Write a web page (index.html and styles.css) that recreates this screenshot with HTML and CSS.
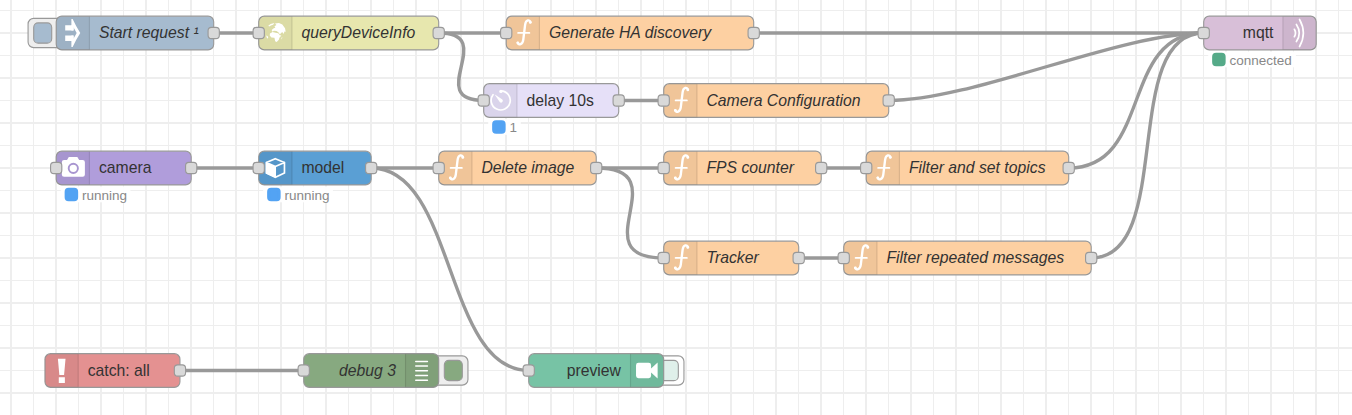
FILE: index.html
```html
<!DOCTYPE html>
<html lang="en">
<head>
<meta charset="utf-8">
<title>Flow editor</title>
<link rel="stylesheet" href="styles.css">
</head>
<body>
<svg class="flow" width="1352" height="415" viewBox="0 0 1352 415">
  <defs>
    <pattern id="grid" x="10" y="10" width="45" height="45" patternUnits="userSpaceOnUse">
      <path class="grid-line" d="M0 0h2v45h-2zM23 0h1v45h-1zM0 0h45v1h-45zM0 22h45v2h-45z"/>
    </pattern>
    <rect id="port" class="port" x="-5" y="-5" width="10" height="10" rx="3"/>
    <g id="shade-left">
      <path class="shade" d="M5 -15H30V15H5A5 5 0 0 1 0 10V-10A5 5 0 0 1 5 -15Z"/>
      <path class="divider" d="M29.5 -14.5V14.5"/>
    </g>
    <g id="shade-right">
      <path class="shade" d="M0 -15H25A5 5 0 0 1 30 -10V10A5 5 0 0 1 25 15H0Z"/>
      <path class="divider" d="M.5 -14.5V14.5"/>
    </g>
    <g id="fn">
      <use href="#shade-left"/>
      <path class="ink" stroke-width="2.1" d="M21.6 -9.6C21 -12.1 17.4 -12 16.8 -7.2L15.2 5.8C14.6 10.5 11 11 10.2 8.8"/>
      <circle class="white" cx="21.4" cy="-9.4" r="1.2"/><circle class="white" cx="10.4" cy="8.7" r="1.2"/>
      <path class="ink" stroke-width="1.6" d="M10.6 -.1H20.6"/>
    </g>
    <g id="status-dot"><rect x="9" y="19" width="9" height="9" rx="2"/></g>
  </defs>
  <rect width="1352" height="415" fill="url(#grid)"/>
  <g transform="translate(56.2 33) scale(1.125)">
    <g class="wires">
      <path d="M140 0H180"/><path d="M340 0H400"/><path d="M620 0H1020"/>
      <path d="M340 0C394 0 326 60 380 60"/>
      <path d="M500 60H540"/><path d="M740 60C815 60 945 0 1020 0"/>
      <path d="M120 120H180"/><path d="M280 120H340"/><path d="M480 120H540"/><path d="M680 120H720"/>
      <path d="M900 120C975 120 945 0 1020 0"/>
      <path d="M480 120C555 120 465 200 540 200"/>
      <path d="M660 200H700"/><path d="M920 200C995 200 945 0 1020 0"/>
      <path d="M280 120C355 120 345 300 420 300"/><path d="M110 300H220"/>
    </g>

    <g>
      <rect class="button" x="-25" y="-13" width="32" height="26" rx="5"/>
      <rect class="box inject" x="-20" y="-9" width="16" height="18" rx="4"/>
      <rect class="box inject" y="-15" width="140" height="30" rx="5"/>
      <use href="#shade-left"/>
      <path class="white" d="M8 -7H13.5V-12.4H14.6Q17.3 -6.5 21.4 0Q17.3 6.5 14.6 12.4H13.5V7H8V2.2H15.2V5.4L18.2 0L15.2 -5.4V-2.2H8Z"/>
      <path class="white" d="M13.5 -7H15.6V-2.2H13.5ZM13.5 2.2H15.6V7H13.5Z"/>
      <text class="label em" x="38" y="4.8">Start request ¹</text>
      <use href="#port" x="140"/>
    </g>

    <g transform="translate(180 0)">
      <rect class="box http" y="-15" width="160" height="30" rx="5"/>
      <use href="#shade-left"/>
      <path class="white" d="M8.5 -6.4L10.6 -8.1L14 -9L12.8 -7.4L10.8 -6.7L9.3 -5.8ZM14.5 -8.4L18 -9L21 -7.5L23.4 -4.3L24 -1.2L22.9 -1.4L22.2 .9L21.2 -.6L20 -.2L18.9 1.4L17.5 -.6L15.8 -1.7L13.5 -2L12.2 -1.2L11.5 -2.6L13.4 -4.2L14.8 -4.6L14 -6.1L15.8 -7.2ZM10 .4L12.3 -1L15 -.2L17.4 .2L18.7 2.1L20.2 2.2L18.4 4.2L17.9 6L16 7.9L14.6 7.4L14 4.3L11.3 3.9L9.8 2.2ZM7 2L8.5 3.5L8 5.2L6.8 3.5ZM20.2 4.2L21.1 3.7L20.4 5.8Z"/>
      <text class="label em" x="38" y="4.8">queryDeviceInfo</text>
      <use href="#port"/><use href="#port" x="160"/>
    </g>

    <g transform="translate(400 0)">
      <rect class="box function" y="-15" width="220" height="30" rx="5"/>
      <use href="#fn"/>
      <text class="label em" x="38" y="4.8">Generate HA discovery</text>
      <use href="#port"/><use href="#port" x="220"/>
    </g>

    <g transform="translate(1020 0)">
      <rect class="box mqtt" y="-15" width="100" height="30" rx="5"/>
      <use href="#shade-right" x="70"/>
      <path class="ink" stroke-width="1.5" stroke-linecap="butt" d="M80.6 -3.3Q82.6 0 80.6 3.3M82.4 -7.6Q87.5 0 82.4 7.6M85.2 -12Q92 0 85.2 12"/>
      <text class="label" x="62" y="4.8" text-anchor="end">mqtt</text>
      <rect class="status-bg" x="4" y="16.5" width="78" height="14"/>
      <use class="green" href="#status-dot"/>
      <text class="status" x="23" y="28.4">connected</text>
      <use href="#port"/>
    </g>

    <g transform="translate(380 60)">
      <rect class="box delay" y="-15" width="120" height="30" rx="5"/>
      <use href="#shade-left"/>
      <path class="ink" stroke-width="1.5" d="M15.3 -8.6A8.5 8.5 0 1 1 8.3 -5.2"/>
      <circle class="white" cx="15.3" cy="-8.1" r="1.5"/>
      <path class="white" d="M9.6 -5.5L16.6 -.8A1.6 1.6 0 0 1 14.4 1.5Z"/>
      <text class="label" x="38" y="4.8">delay 10s</text>
      <rect class="status-bg" x="4" y="16.5" width="29" height="14"/>
      <use class="blue" href="#status-dot"/>
      <text class="status" x="23" y="28.4">1</text>
      <use href="#port"/><use href="#port" x="120"/>
    </g>

    <g transform="translate(540 60)">
      <rect class="box function" y="-15" width="200" height="30" rx="5"/>
      <use href="#fn"/>
      <text class="label em" x="38" y="4.8">Camera Configuration</text>
      <use href="#port"/><use href="#port" x="200"/>
    </g>

    <g transform="translate(0 120)">
      <rect class="box camera" y="-15" width="120" height="30" rx="5"/>
      <use href="#shade-left"/>
      <path class="white" d="M7 -7.2H9.6L11.2 -9.8H18.8L20.4 -7.2H23.5A2 2 0 0 1 25.5 -5.2V5.7A2 2 0 0 1 23.5 7.7H7A2 2 0 0 1 5 5.7V-5.2A2 2 0 0 1 7 -7.2Z"/>
      <circle class="lens" cx="15.2" cy=".3" r="4.1"/>
      <text class="label" x="38" y="4.8">camera</text>
      <rect class="status-bg" x="4" y="16.5" width="62" height="14"/>
      <use class="blue" href="#status-dot"/>
      <text class="status" x="23" y="28.4">running</text>
      <use href="#port"/><use href="#port" x="120"/>
    </g>

    <g transform="translate(180 120)">
      <rect class="box model" y="-15" width="100" height="30" rx="5"/>
      <use href="#shade-left"/>
      <path class="ink" stroke-width="1.5" d="M14.8 -8.2L22.9 -4.9V4.4L14.8 8.2L6.8 4.4V-4.9ZM14.8 -1.4L22.9 -4.9M14.8 -1.4L6.8 -4.9"/>
      <path class="white" d="M6.4 -4.9L15.4 -1.2V8.8L6.4 4.8Z"/>
      <text class="label" x="38" y="4.8">model</text>
      <rect class="status-bg" x="4" y="16.5" width="62" height="14"/>
      <use class="blue" href="#status-dot"/>
      <text class="status" x="23" y="28.4">running</text>
      <use href="#port"/><use href="#port" x="100"/>
    </g>

    <g transform="translate(340 120)">
      <rect class="box function" y="-15" width="140" height="30" rx="5"/>
      <use href="#fn"/>
      <text class="label em" x="38" y="4.8">Delete image</text>
      <use href="#port"/><use href="#port" x="140"/>
    </g>

    <g transform="translate(540 120)">
      <rect class="box function" y="-15" width="140" height="30" rx="5"/>
      <use href="#fn"/>
      <text class="label em" x="38" y="4.8">FPS counter</text>
      <use href="#port"/><use href="#port" x="140"/>
    </g>

    <g transform="translate(720 120)">
      <rect class="box function" y="-15" width="180" height="30" rx="5"/>
      <use href="#fn"/>
      <text class="label em" x="38" y="4.8">Filter and set topics</text>
      <use href="#port"/><use href="#port" x="180"/>
    </g>

    <g transform="translate(540 200)">
      <rect class="box function" y="-15" width="120" height="30" rx="5"/>
      <use href="#fn"/>
      <text class="label em" x="38" y="4.8">Tracker</text>
      <use href="#port"/><use href="#port" x="120"/>
    </g>

    <g transform="translate(700 200)">
      <rect class="box function" y="-15" width="220" height="30" rx="5"/>
      <use href="#fn"/>
      <text class="label em" x="38" y="4.8">Filter repeated messages</text>
      <use href="#port"/><use href="#port" x="220"/>
    </g>

    <g transform="translate(-10 300)">
      <rect class="box catch" y="-15" width="120" height="30" rx="5"/>
      <use href="#shade-left"/>
      <path class="white" d="M11.5 -10.4H18.3L17 4H12.8ZM12.3 6H17.7V11.2H12.3Z"/>
      <text class="label" x="38" y="4.8">catch: all</text>
      <use href="#port" x="120"/>
    </g>

    <g transform="translate(220 300)">
      <rect class="button" x="114" y="-13" width="32" height="26" rx="5"/>
      <rect class="box debug" x="125" y="-9" width="16" height="18" rx="4"/>
      <rect class="box debug" y="-15" width="120" height="30" rx="5"/>
      <use href="#shade-right" x="90"/>
      <path class="ink" stroke-width="1.3" stroke-linecap="butt" d="M99.6 -8H110M99.6 -4H110M99.6 .2H110M99.6 4.4H110M99.6 8.6H110"/>
      <text class="label em" x="82" y="4.8" text-anchor="end">debug 3</text>
      <use href="#port"/>
    </g>

    <g transform="translate(420 300)">
      <rect class="button off" x="106" y="-13" width="32" height="26" rx="5"/>
      <rect class="box mint" x="117" y="-9" width="16" height="18" rx="4"/>
      <rect class="box preview" y="-15" width="120" height="30" rx="5"/>
      <use href="#shade-right" x="90"/>
      <path class="white" d="M97.6 -6.8H106.6A2.2 2.2 0 0 1 108.8 -4.6V-1.8L114.6 -7.2V7.2L108.8 1.8V4.6A2.2 2.2 0 0 1 106.6 6.8H97.6A2.2 2.2 0 0 1 95.4 4.6V-4.6A2.2 2.2 0 0 1 97.6 -6.8Z"/>
      <text class="label" x="82" y="4.8" text-anchor="end">preview</text>
      <use href="#port"/>
    </g>
  </g>
</svg>
</body>
</html>
```

FILE: styles.css
```css
body {
  margin: 0;
  background: #fff;
  overflow: hidden;
}

.flow {
  display: block;
  font-family: "Liberation Sans", Arial, sans-serif;
}

.grid-line { fill: #eee; shape-rendering: crispEdges; }

.wires path {
  fill: none;
  stroke: #999;
  stroke-width: 3;
}

.box { stroke: #999; stroke-width: 1; }
.inject { fill: #a6bbcf; }
.http { fill: #e7e7ae; }
.function { fill: #fdd0a2; }
.mqtt { fill: #d8bfd8; }
.delay { fill: #e6e0f8; }
.camera { fill: #b09ddb; }
.model { fill: #5a9fd4; }
.catch { fill: #e49191; }
.debug { fill: #87a980; }
.preview { fill: #77c3a5; }
.mint { fill: #dff0ea; }

.button { fill: #eee; stroke: #999; }
.button.off { fill: #fff; }

.port { fill: #d9d9d9; stroke: #999; stroke-width: 1; }

.shade { fill: #000; fill-opacity: 0.05; }
.divider { stroke: #000; stroke-opacity: 0.1; }

.white { fill: #fff; }
.ink { fill: none; stroke: #fff; stroke-linecap: round; }
.lens { fill: none; stroke: #a895d0; stroke-width: 1.7; }

.label { font-size: 14px; fill: #333; }
.em { font-style: italic; }

.status { font-size: 12px; fill: #888; }
.status-bg { fill: #fff; fill-opacity: 0.9; }
.blue { fill: #53a3f3; stroke: #53a3f3; stroke-width: 3; }
.green { fill: #5a8; stroke: #5a8; stroke-width: 3; }
```
